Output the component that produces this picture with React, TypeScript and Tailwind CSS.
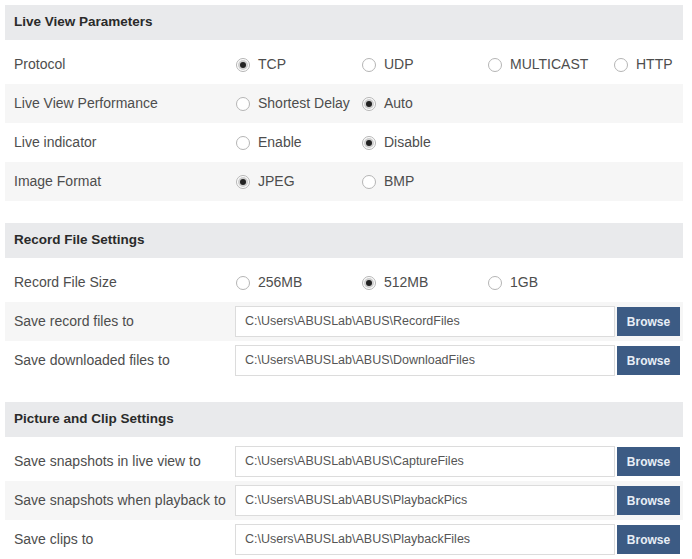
import React from "react";

type RadioRow = { kind: "radio"; label: string; options: string[]; checked: number };
type PathRow = { kind: "path"; label: string; value: string };
type Row = RadioRow | PathRow;

const sections: { title: string; rows: Row[] }[] = [
  {
    title: "Live View Parameters",
    rows: [
      { kind: "radio", label: "Protocol", options: ["TCP", "UDP", "MULTICAST", "HTTP"], checked: 0 },
      { kind: "radio", label: "Live View Performance", options: ["Shortest Delay", "Auto"], checked: 1 },
      { kind: "radio", label: "Live indicator", options: ["Enable", "Disable"], checked: 1 },
      { kind: "radio", label: "Image Format", options: ["JPEG", "BMP"], checked: 0 },
    ],
  },
  {
    title: "Record File Settings",
    rows: [
      { kind: "radio", label: "Record File Size", options: ["256MB", "512MB", "1GB"], checked: 1 },
      { kind: "path", label: "Save record files to", value: "C:\\Users\\ABUSLab\\ABUS\\RecordFiles" },
      { kind: "path", label: "Save downloaded files to", value: "C:\\Users\\ABUSLab\\ABUS\\DownloadFiles" },
    ],
  },
  {
    title: "Picture and Clip Settings",
    rows: [
      { kind: "path", label: "Save snapshots in live view to", value: "C:\\Users\\ABUSLab\\ABUS\\CaptureFiles" },
      { kind: "path", label: "Save snapshots when playback to", value: "C:\\Users\\ABUSLab\\ABUS\\PlaybackPics" },
      { kind: "path", label: "Save clips to", value: "C:\\Users\\ABUSLab\\ABUS\\PlaybackFiles" },
    ],
  },
];

function Radio({ label, on }: { label: string; on: boolean }) {
  return (
    <div className="flex w-[126px] items-center gap-[8px] last:w-auto">
      <span className="flex h-[14px] w-[14px] shrink-0 items-center justify-center rounded-full border border-[#b5b5b5] bg-white">
        {on && <span className="h-[6px] w-[6px] rounded-full bg-[#222] ring-2 ring-[#cfcfcf]" />}
      </span>
      <span className="whitespace-nowrap">{label}</span>
    </div>
  );
}

function SettingRow({ row, shaded }: { row: Row; shaded: boolean }) {
  return (
    <div className={`flex h-[39px] items-center ${shaded ? "bg-[#f6f6f6]" : "bg-white"}`}>
      <div className="w-[230px] shrink-0 pl-[9px] whitespace-nowrap">{row.label}</div>
      {row.kind === "radio" ? (
        <div className="flex items-center pl-[1px]">
          {row.options.map((o, i) => (
            <Radio key={o} label={o} on={i === row.checked} />
          ))}
        </div>
      ) : (
        <div className="flex items-center gap-[2px]">
          <div className="flex h-[31px] w-[380px] items-center border border-[#dcdcdc] bg-white pl-[9px] text-[12.5px] text-[#555]">
            {row.value}
          </div>
          <button className="h-[29px] w-[63px] bg-[#3c5b84] text-[12px] font-bold text-[#e8eef6]">
            Browse
          </button>
        </div>
      )}
    </div>
  );
}

export default function App() {
  return (
    <div
      className="min-h-[559px] w-[692px] overflow-hidden bg-white pl-[5px] pr-[9px] pt-[5px] text-[14px] text-[#4d4d4d]"
      style={{ fontFamily: '"Liberation Sans", Arial, sans-serif' }}
    >
      <div className="flex flex-col gap-[22px]">
        {sections.map((s) => (
          <section key={s.title}>
            <div className="flex h-[35px] items-center bg-[#e9eaec] pl-[9px] text-[13.5px] font-bold text-[#2a2a2a]">
              {s.title}
            </div>
            <div className="mt-[5px]">
              {s.rows.map((r, i) => (
                <SettingRow key={r.label} row={r} shaded={i % 2 === 1} />
              ))}
            </div>
          </section>
        ))}
      </div>
    </div>
  );
}
